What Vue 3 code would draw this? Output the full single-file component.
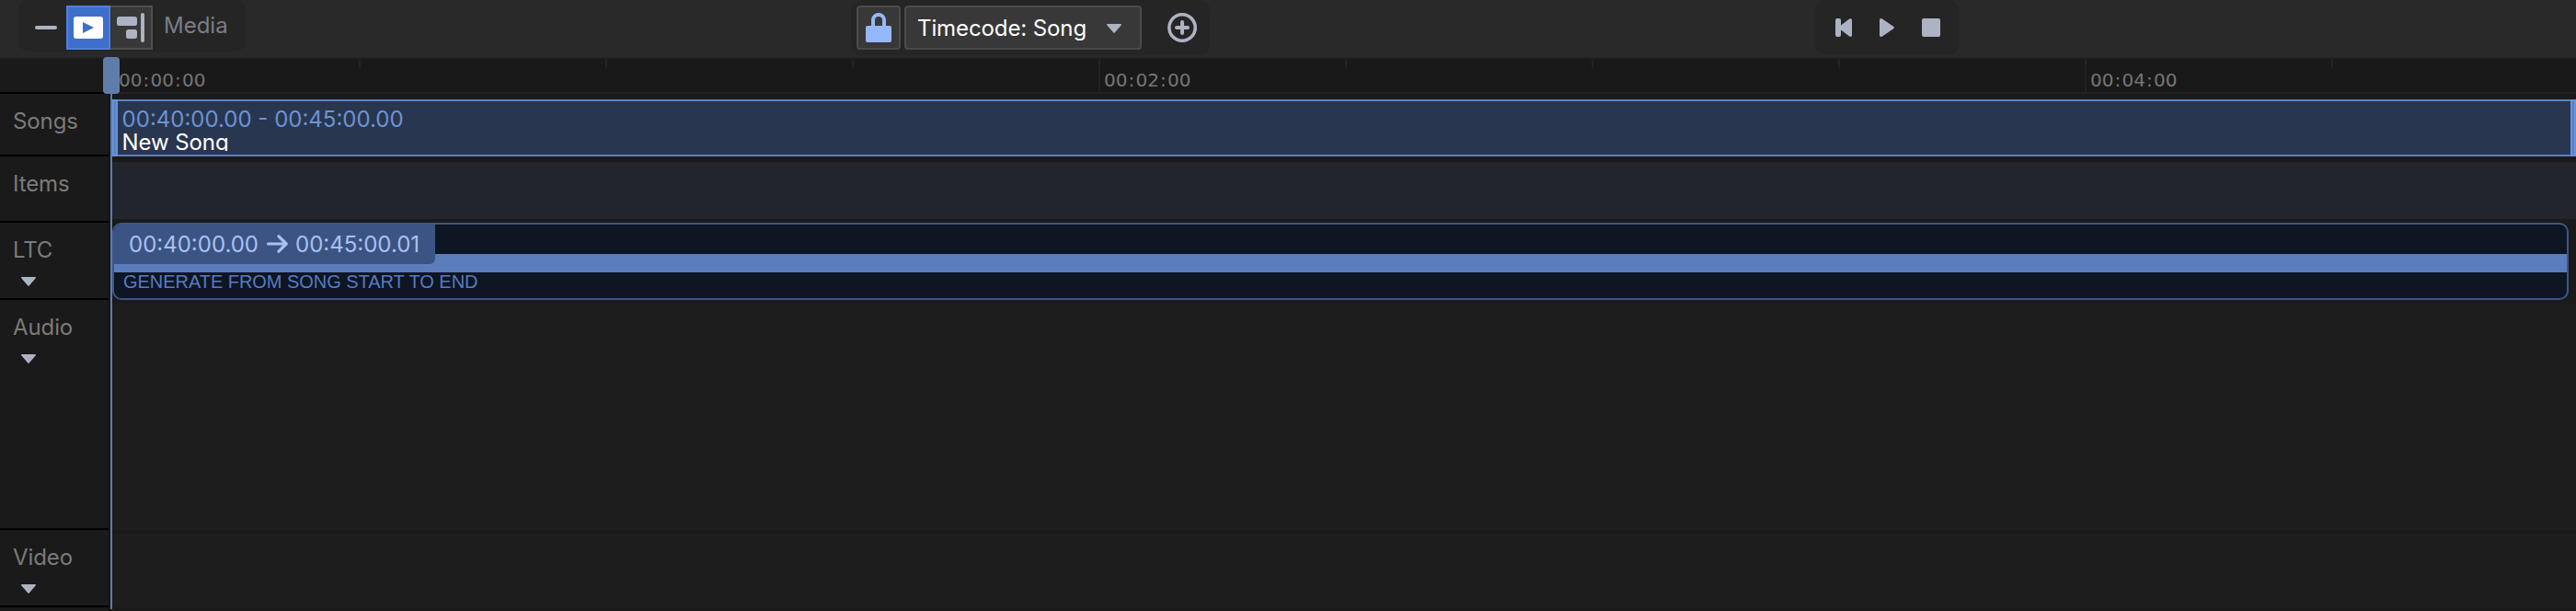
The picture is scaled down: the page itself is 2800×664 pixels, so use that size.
<script setup>
const ticks = [
  { label: '00:00:00' }, {}, {}, {},
  { label: '00:02:00' }, {}, {}, {},
  { label: '00:04:00' }, {}
]
const tracks = [
  { name: 'Songs', size: 'songs' },
  { name: 'Items', size: 'items' },
  { name: 'LTC', size: 'ltc', caret: true },
  { name: 'Audio', size: 'audio', caret: true },
  { name: 'Video', size: 'video', caret: true }
]
</script>

<template>
  <div class="timeline">
    <header class="toolbar">
      <div class="group media-group">
        <svg class="minus" width="24" height="4"><rect width="24" height="4" rx="2" /></svg>
        <div class="toggle">
          <button class="seg active">
            <svg width="32" height="24" viewBox="0 0 32 24">
              <rect width="32" height="24" rx="3" fill="#fff" />
              <path d="M10 6 L22 12 L10 18 Z" fill="#3f6fcd" />
            </svg>
          </button>
          <button class="seg">
            <svg width="30" height="32" viewBox="0 0 30 32">
              <rect y="4" width="22" height="10" rx="2.5" />
              <rect x="10" y="18" width="12" height="10" rx="2.5" />
              <rect x="26" width="4" height="32" rx="2" />
            </svg>
          </button>
        </div>
        <span class="media">Media</span>
      </div>

      <div class="group code-group">
        <button class="box lock">
          <svg width="28" height="32" viewBox="0 0 28 32">
            <path d="M8 15 V8 A6 6 0 0 1 20 8 V15" fill="none" stroke="#94b8fb" stroke-width="4" />
            <rect y="14" width="28" height="18" rx="2" fill="#94b8fb" />
          </svg>
        </button>
        <button class="box select">
          <span>Timecode: Song</span>
          <svg width="16" height="10" viewBox="0 0 16 10"><path d="M.6 0 H15.4 Q16.4 .5 15.6 1.4 L8.7 9.4 Q8 10.2 7.3 9.4 L.4 1.4 Q-.4 .5 .6 0 Z" /></svg>
        </button>
        <svg class="add" width="32" height="32" viewBox="0 0 32 32">
          <circle cx="16" cy="16" r="14.2" fill="none" stroke="#adb3c2" stroke-width="3.6" />
          <path d="M10 16 H22 M16 10 V22" fill="none" stroke="#adb3c2" stroke-width="4" stroke-linecap="round" />
        </svg>
      </div>

      <div class="group transport">
        <svg width="18" height="20" viewBox="0 0 18 20">
          <rect width="6" height="20" rx="2" />
          <path d="M15.2 .6 Q18 -.8 18 2 V18 Q18 20.8 15.2 19.4 L6 12.5 V7.5 Z" />
        </svg>
        <svg width="16" height="20" viewBox="0 0 16 20">
          <path d="M0 1.8 Q.2 -.8 3 .4 L15.4 9 Q16.4 10 15.4 11 L3 19.6 Q.2 20.8 0 18.2 Z" />
        </svg>
        <svg width="20" height="20" viewBox="0 0 20 20"><rect width="20" height="20" rx="2" /></svg>
      </div>
    </header>

    <div class="body">
      <aside class="sidebar">
        <div class="corner"></div>
        <div v-for="t in tracks" :key="t.name" class="head" :class="t.size">
          <span>{{ t.name }}</span>
          <svg v-if="t.caret" width="16" height="10" viewBox="0 0 16 10"><path d="M.6 0 H15.4 Q16.4 .5 15.6 1.4 L8.7 9.4 Q8 10.2 7.3 9.4 L.4 1.4 Q-.4 .5 .6 0 Z" /></svg>
        </div>
      </aside>

      <main class="lanes">
        <div class="ruler">
          <div v-for="(t, i) in ticks" :key="i" class="cell">
            <i class="tick" :class="{ major: t.label }"></i>
            <span v-if="t.label" class="time"><template v-for="(p, k) in t.label.split(':')" :key="k"><b v-if="k">:</b>{{ p }}</template></span>
          </div>
        </div>
        <div class="lane song-lane">
          <div class="song">
            <i class="grip"></i>
            <div class="song-text">
              <div class="range">00:40:00.00 - 00:45:00.00</div>
              <div class="name">New Song</div>
            </div>
            <i class="grip"></i>
          </div>
        </div>
        <div class="lane item-lane"></div>
        <div class="lane ltc-lane">
          <div class="clip">
            <div class="band"></div>
            <div class="note">GENERATE FROM SONG START TO END</div>
            <div class="badge">
              <span>00:40:00.00</span>
              <svg width="23" height="20" viewBox="0 0 23 20"><path d="M1.5 10 H21 M13 1.8 L21.2 10 L13 18.2" fill="none" stroke="#a9c1f1" stroke-width="3.2" stroke-linecap="round" stroke-linejoin="round" /></svg>
              <span>00:45:00.01</span>
            </div>
          </div>
        </div>
        <div class="lane audio-lane"></div>
        <div class="lane video-lane"></div>
      </main>

      <div class="playhead"><i class="knob"></i></div>
    </div>
  </div>
</template>

<style>
body { background: #1a1a1a; }
</style>

<style scoped>
* { box-sizing: border-box; }
.timeline {
  width: 2800px;
  height: 664px;
  overflow: hidden;
  background: #1a1a1a;
  font: 24px/29px "Inter", sans-serif;
  color: #7b7b7b;
}
svg { display: block; flex: none; fill: #adb3c2; }
button { padding: 0; margin: 0; font: inherit; color: inherit; }

.toolbar {
  display: flex;
  align-items: flex-start;
  height: 64px;
  background: #292929;
  border-bottom: 2px solid #222;
}
.group { display: flex; align-items: center; height: 60px; background: #252525; border-radius: 12px; }
.media-group { width: 247px; height: 56px; margin-left: 20px; padding-left: 18px; }
.minus { margin: 4px 10px 0 0; }
.toggle { display: flex; margin-top: 4px; }
.seg {
  display: flex; align-items: center; justify-content: center;
  width: 46px; height: 48px;
  background: #383838;
  border: 2px solid #4d4d4d; border-left: 0;
}
.seg.active { width: 48px; background: #3f6fcd; border: 2px solid #5080d6; }
.media { margin: -1px 0 0 12px; color: #7a7d84; }

.code-group { width: 390px; margin-left: 658px; padding-left: 6px; }
.box { display: flex; align-items: center; height: 48px; background: #383838; border: 2px solid #4a4a4a; border-radius: 4px; }
.lock { width: 48px; justify-content: center; }
.select { width: 258px; margin-left: 4px; padding: 0 20px 0 12px; justify-content: space-between; color: #fff; }
.select svg { margin-top: 2px; }
.select span { letter-spacing: -0.1px; }
.add { margin-left: 28px; }

.transport { width: 156px; margin-left: 658px; padding-left: 22px; gap: 30px; }

.body { position: relative; display: flex; height: 600px; }
.sidebar { flex: none; width: 120px; border-right: 2px solid #141414; background: #1a1a1a; }
.corner { height: 38px; border-bottom: 2px solid #000; }
.head { padding: 15px 0 0 14px; border-bottom: 2px solid #000; }
.head span { display: block; letter-spacing: -0.1px; }
.head svg { margin: 15px 0 0 9px; }
.head.songs { height: 68px; }
.head.items { height: 72px; }
.head.ltc { height: 84px; }
.head.audio { height: 250px; }
.head.video { height: 84px; }

.lanes { flex: none; width: 2680px; }
.ruler { display: flex; height: 38px; padding-left: 2px; overflow: hidden; background: #191919; border-bottom: 2px solid #222; }
.cell { flex: none; display: flex; width: 268px; }
.tick { width: 2px; height: 10px; background: #232323; }
.tick.major { height: 36px; }
.time { margin: 12px 0 0 4px; font: 20px/23px "DejaVu Sans", sans-serif; color: #767676; }
.cell:first-child .time { margin-left: 5px; }
.time b { font-weight: 400; margin: 0 1.15px; }

.song-lane { height: 74px; padding-top: 6px; }
.song { display: flex; height: 62px; background: #293650; border-top: 2px solid #5d7fc0; border-bottom: 2px solid #5d7fc0; }
.grip { flex: none; width: 6px; margin: -2px 0; border: 2px solid #6b92d4; background: #5580d0; }
.grip:first-child { width: 8px; border-left-width: 4px; }
.song-text { flex: 1; height: 54px; overflow: hidden; padding: 7px 0 0 4.6px; line-height: 25px; }
.range { color: #6c93d3; }
.name { color: #fff; letter-spacing: -0.1px; }
.item-lane { height: 62px; background: #22252d; }
.ltc-lane { height: 88px; padding: 4px 0 0 2px; }
.clip { position: relative; width: 2670px; height: 84px; padding-top: 32px; background: #0e1523; border: 2px solid #3d5687; border-radius: 10px; overflow: hidden; }
.band { height: 20px; background: #5b7dbd; }
.note { margin: 2px 0 0 10px; font: 20px/17px "Liberation Sans", sans-serif; letter-spacing: -0.04px; color: #587bc0; }
.badge {
  position: absolute; left: -2px; top: -2px;
  display: flex; align-items: center;
  width: 351px; height: 45px; padding: 0 0 1px 18px;
  background: #3c5483;
  border-top: 2px solid #5777b6;
  border-radius: 10px 0 6px 0;
  color: #a9c1f1;
}
.badge svg { margin: 0 8px 0 9px; }
.audio-lane { height: 246px; margin-top: 4px; background: #1d1d1d; }
.video-lane { height: 80px; margin-top: 4px; background: #1d1d1d; }

.playhead { position: absolute; left: 120px; top: 38px; width: 2px; height: 560px; background: #5f7dae; }
.knob { position: absolute; left: -8px; top: -40px; width: 18px; height: 40px; border-radius: 4px; background: #5f7dab; }
</style>
